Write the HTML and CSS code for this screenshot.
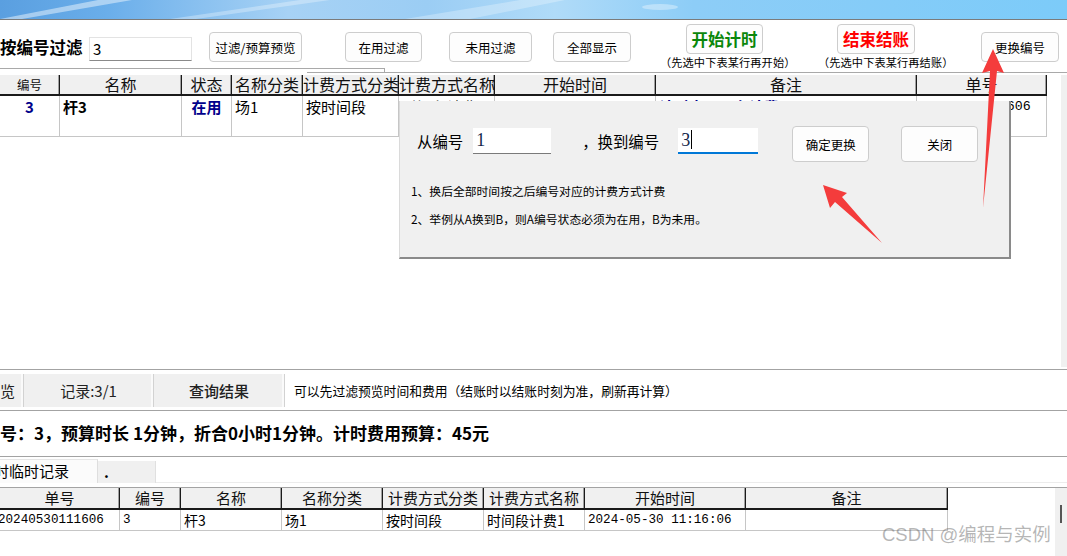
FILE: index.html
```html
<!DOCTYPE html>
<html lang="zh">
<head>
<meta charset="utf-8">
<title>更换编号</title>
<link rel="stylesheet" href="styles.css">
</head>
<body>
<div class="app">
  <div class="banner">
    <svg class="streaks" width="1067" height="19" viewBox="0 0 1067 19">
      <polygon points="0,19 22,19 132,0 98,0" fill="#ffffff" fill-opacity="0.45"/>
      <polygon points="170,19 196,19 330,0 300,0" fill="#ffffff" fill-opacity="0.3"/>
      <polygon points="405,19 470,19 565,0 520,0" fill="#ffffff" fill-opacity="0.28"/>
      <ellipse cx="660" cy="7" rx="18" ry="3" fill="#ffffff" fill-opacity="0.35"/>
    </svg>
  </div>

  <div class="toolbar">
    <div class="filter-label">按编号过滤</div>
    <div class="tb-input">3</div>
    <div class="btn btn-preview">过滤/预算预览</div>
    <div class="btn btn-inuse">在用过滤</div>
    <div class="btn btn-unused">未用过滤</div>
    <div class="btn btn-all">全部显示</div>
    <div class="big-group group-start">
      <div class="btn btn-big green">开始计时</div>
      <div class="hint">（先选中下表某行再开始）</div>
    </div>
    <div class="big-group group-end">
      <div class="btn btn-big red">结束结账</div>
      <div class="hint">（先选中下表某行再结账）</div>
    </div>
    <div class="btn btn-change">更换编号</div>
  </div>

  <div class="divider"></div>

  <div class="grid-area">
    <div class="grid">
      <div class="hcell small">编号</div>
      <div class="hcell">名称</div>
      <div class="hcell">状态</div>
      <div class="hcell">名称分类</div>
      <div class="hcell">计费方式分类</div>
      <div class="hcell">计费方式名称</div>
      <div class="hcell">开始时间</div>
      <div class="hcell">备注</div>
      <div class="hcell">单号</div>

      <div class="dcell center blue bold">3</div>
      <div class="dcell bold">杆3</div>
      <div class="dcell center blue bold">在用</div>
      <div class="dcell">场1</div>
      <div class="dcell">按时间段</div>
      <div class="dcell">时间段计费1</div>
      <div class="dcell"></div>
      <div class="dcell blue bold">计时中，正在计费</div>
      <div class="dcell mono">20240530111606</div>
    </div>
    <div class="vscroll"></div>
  </div>

  <div class="statusbar">
    <div class="scell s1">览</div>
    <div class="scell s2">记录:3/1</div>
    <div class="scell s3">查询结果</div>
    <div class="sinfo">可以先过滤预览时间和费用（结账时以结账时刻为准，刷新再计算）</div>
  </div>

  <div class="summary">号：3，预算时长 1分钟，折合0小时1分钟。计时费用预算：45元</div>

  <div class="tabs">
    <div class="tab active"><span class="tab-text">计时临时记录</span></div>
    <div class="tab inactive">.</div>
  </div>

  <div class="bottom-area">
    <div class="grid2">
      <div class="h2cell">单号</div>
      <div class="h2cell">编号</div>
      <div class="h2cell">名称</div>
      <div class="h2cell">名称分类</div>
      <div class="h2cell">计费方式分类</div>
      <div class="h2cell">计费方式名称</div>
      <div class="h2cell">开始时间</div>
      <div class="h2cell">备注</div>

      <div class="d2cell mono first">20240530111606</div>
      <div class="d2cell mono">3</div>
      <div class="d2cell">杆3</div>
      <div class="d2cell">场1</div>
      <div class="d2cell">按时间段</div>
      <div class="d2cell">时间段计费1</div>
      <div class="d2cell mono">2024-05-30 11:16:06</div>
      <div class="d2cell"></div>
    </div>
    <div class="vscroll2"><div class="thumb"></div></div>
  </div>

  <div class="dialog">
    <div class="dlg-row">
      <div class="dlg-label from-label">从编号</div>
      <div class="dlg-input in-from">1</div>
      <div class="dlg-label to-label">，换到编号</div>
      <div class="dlg-input in-to focused">3<span class="caret"></span></div>
      <div class="btn dlg-btn btn-ok">确定更换</div>
      <div class="btn dlg-btn btn-close">关闭</div>
    </div>
    <div class="note note1">1、换后全部时间按之后编号对应的计费方式计费</div>
    <div class="note note2">2、举例从A换到B，则A编号状态必须为在用，B为未用。</div>
  </div>

  <svg class="arrows" width="1067" height="556" viewBox="0 0 1067 556">
    <polygon points="993,49 1004,73 997,71 983,208 990,71 982,73" fill="#f43c3c"/>
    <polygon points="823,185 847,193 842,197 882,243 835,202 830,208" fill="#f43c3c"/>
  </svg>

  <div class="watermark">CSDN @编程与实例</div>
</div>
</body>
</html>
```

FILE: styles.css
```css
html, body {
  margin: 0;
  padding: 0;
  background: #ffffff;
}

body {
  width: 1067px;
  height: 556px;
  overflow: hidden;
  font-family: "Noto Sans CJK SC", "Noto Sans", sans-serif;
  color: #000;
}

.app {
  position: relative;
  width: 1067px;
  height: 556px;
  overflow: hidden;
}

/* banner */
.banner {
  height: 19px;
  border-bottom: 1px solid #7b7b7b;
  background: linear-gradient(90deg, #5a9fe0 0%, #6aaeea 10%, #a7d2f5 27%, #9bcdf4 40%, #b0dbf8 52%, #8dcdf7 65%, #7ccbf9 100%);
  overflow: hidden;
}

.streaks {
  display: block;
}

/* toolbar */
.toolbar {
  height: 48px;
  display: flex;
  align-items: flex-start;
}

.filter-label {
  width: 82px;
  margin-top: 16px;
  font-size: 16.5px;
  font-weight: bold;
  line-height: 22px;
  white-space: nowrap;
}

.tb-input {
  margin-left: 7px;
  margin-top: 17px;
  width: 103px;
  height: 24px;
  padding-left: 3px;
  background: #fff;
  border-top: 1px solid #e3e3e3;
  border-left: 1px solid #e3e3e3;
  border-bottom: 1px solid #8a8a8a;
  border-right: 1px solid #e3e3e3;
  box-sizing: border-box;
  font-size: 15px;
  line-height: 22px;
}

.btn {
  box-sizing: border-box;
  background: #fdfdfd;
  border: 1px solid #cdcdcd;
  border-radius: 4px;
  font-size: 12.5px;
  display: flex;
  align-items: center;
  justify-content: center;
  white-space: nowrap;
}

.toolbar > .btn {
  margin-top: 12px;
  height: 30px;
}

.btn-preview { margin-left: 17px; width: 93px; }
.btn-inuse { margin-left: 43px; width: 77px; }
.btn-unused { margin-left: 27px; width: 83px; }
.btn-all { margin-left: 21px; width: 78px; }
.btn-change { margin-left: 28px; width: 78px; }

.big-group {
  width: 135px;
  margin-top: 4px;
  display: flex;
  flex-direction: column;
}

.group-start { margin-left: 29px; }
.group-end { margin-left: 23px; }

.btn-big {
  height: 30px;
  width: 77px;
  font-size: 16.5px;
  font-weight: bold;
}

.group-start .btn-big { margin-left: 26px; }
.group-end .btn-big { margin-left: 19px; width: 78px; }

.green { color: #0a870a; }
.red { color: #ff0000; }

.hint {
  font-size: 11.2px;
  line-height: 16px;
  white-space: nowrap;
  letter-spacing: 0.1px;
}

/* divider */
.divider {
  height: 7px;
  background:
    linear-gradient(#a9a9a9, #a9a9a9) 0 0 / 384px 1px no-repeat,
    linear-gradient(#a9a9a9, #a9a9a9) 307px 4px / 760px 1px no-repeat,
    linear-gradient(#a9a9a9, #a9a9a9) 384px 0 / 1px 5px no-repeat;
}

/* top grid */
.grid-area {
  height: 294px;
  display: flex;
  align-items: flex-start;
}

.grid {
  width: 1047px;
  display: grid;
  grid-template-columns: 60px 122px 50px 71px 96px 96px 161px 261px 130px;
  grid-template-rows: 21px 41px;
}

.hcell {
  background: #f0f0f0;
  border-right: 1px solid #1a1a1a;
  box-shadow: inset -1px 0 #a0a0a0;
  border-bottom: 2px solid #1a1a1a;
  font-size: 16px;
  line-height: 19px;
  text-align: center;
  white-space: nowrap;
  color: #111;
}

.hcell.small {
  font-size: 12.5px;
}

.dcell {
  border-right: 1px solid #c6c6c6;
  border-bottom: 1px solid #c6c6c6;
  font-size: 15px;
  line-height: 20px;
  padding: 1px 0 0 3px;
  white-space: nowrap;
  overflow: hidden;
}

.dcell.center {
  text-align: center;
  padding-left: 0;
}

.blue { color: #00008b; }
.bold { font-weight: bold; }

.mono {
  font-family: "Liberation Mono", "Noto Sans CJK SC", monospace;
}

.dcell.mono {
  font-size: 13.3px;
  padding-left: 2px;
}

.vscroll {
  width: 6px;
  height: 292px;
  margin-left: 14px;
  background: #f0f0f0;
}

/* status bar */
.statusbar {
  border-top: 1px solid #a3a3a3;
  height: 40px;
  display: flex;
  align-items: center;
}

.scell {
  height: 33px;
  background: #f0f0f0;
  border-right: 1px solid #d2d2d2;
  box-shadow: inset -2px 0 #fafafa;
  display: flex;
  align-items: center;
  justify-content: center;
  font-size: 15px;
  color: #222;
  box-sizing: border-box;
}

.s1 { width: 24px; justify-content: flex-start; }
.s2 { width: 130px; }
.s3 { width: 131px; font-weight: 500; }

.sinfo {
  margin-left: 9px;
  font-size: 12.8px;
  white-space: nowrap;
}

/* summary */
.summary {
  border-top: 1px solid #a3a3a3;
  height: 45px;
  font-size: 17px;
  font-weight: bold;
  line-height: 43px;
  white-space: nowrap;
}

/* tabs */
.tabs {
  border-top: 1px solid #a3a3a3;
  height: 31px;
  display: flex;
  align-items: flex-end;
  box-sizing: border-box;
  padding-bottom: 4px;
  box-shadow: inset 0 -4px #fff, inset 0 -5px #ececec;
}

.tab {
  height: 24px;
  box-sizing: border-box;
  font-size: 15px;
  line-height: 22px;
  overflow: hidden;
  white-space: nowrap;
}

.tab.active {
  width: 98px;
  background: #fbfbfb;
  border-right: 1px solid #dedede;
  border-top: 1px solid #e6e6e6;
}

.tab-text {
  display: block;
  text-indent: -21px;
}

.tab.inactive {
  width: 58px;
  height: 22px;
  background: #f0f0f0;
  border-right: 1px solid #e0e0e0;
  padding-left: 6px;
  font-weight: bold;
}

/* bottom grid */
.bottom-area {
  border-top: 1px solid #a3a3a3;
  display: flex;
  align-items: flex-start;
}

.grid2 {
  width: 948px;
  display: grid;
  grid-template-columns: 120px 61px 101px 101px 101px 101px 161px 202px;
  grid-template-rows: 22px 21px;
}

.h2cell {
  background: #f0f0f0;
  border-right: 1px solid #1a1a1a;
  box-shadow: inset -1px 0 #a0a0a0;
  border-bottom: 2px solid #1a1a1a;
  font-size: 15px;
  line-height: 20px;
  text-align: center;
  white-space: nowrap;
  color: #111;
}

.d2cell {
  border-right: 1px solid #c6c6c6;
  border-bottom: 1px solid #c6c6c6;
  font-size: 14px;
  line-height: 20px;
  padding-left: 3px;
  white-space: nowrap;
  overflow: hidden;
}

.d2cell.mono {
  font-size: 12.6px;
}

.d2cell.first {
  padding-left: 0;
  text-indent: -2px;
}

.vscroll2 {
  width: 12px;
  height: 70px;
  margin-left: 107px;
  background: #f0f0f0;
  display: flex;
  justify-content: center;
}

.thumb {
  width: 2px;
  height: 18px;
  margin-top: 17px;
  background: #555;
}

/* dialog overlay */
.dialog {
  position: absolute;
  left: 399px;
  top: 101px;
  width: 609px;
  height: 156px;
  background: #f0f0f0;
  border-left: 1px solid #dadada;
  border-right: 2px solid #8a8a8a;
  border-bottom: 2px solid #8a8a8a;
}

.dlg-row {
  display: flex;
  align-items: flex-start;
  margin-top: 24px;
  height: 37px;
}

.dlg-label {
  margin-top: 3px;
  line-height: 26px;
  font-size: 15.4px;
  white-space: nowrap;
}

.from-label { margin-left: 17px; }
.to-label { margin-left: 31px; }

.dlg-input {
  margin-top: 3px;
  height: 26px;
  box-sizing: border-box;
  background: #fff;
  font-family: "Liberation Serif", serif;
  font-size: 18px;
  line-height: 25px;
  padding-left: 3px;
  color: #14284a;
}

.in-from {
  margin-left: 10px;
  width: 78px;
  border-bottom: 1px solid #7a7a7a;
}

.in-to {
  margin-left: 19px;
  width: 80px;
  border-bottom: 2px solid #0078d7;
}

.caret {
  display: inline-block;
  width: 1px;
  height: 19px;
  background: #000;
  vertical-align: -3px;
  margin-left: 1px;
}

.dlg-btn {
  margin-top: 1px;
  height: 36px;
  width: 77px;
}

.btn-ok { margin-left: 34px; }
.btn-close { margin-left: 32px; }

.note {
  font-size: 11.8px;
  line-height: 18px;
  padding-left: 11px;
  white-space: nowrap;
}

.note1 { margin-top: 20px; }
.note2 { margin-top: 10px; }

.arrows {
  position: absolute;
  left: 0;
  top: 0;
  pointer-events: none;
}

.watermark {
  position: absolute;
  left: 882px;
  top: 522px;
  font-family: "Liberation Sans", "Noto Sans CJK SC", sans-serif;
  font-size: 18.5px;
  line-height: 26px;
  color: rgba(110, 110, 110, 0.5);
  white-space: nowrap;
}
```
